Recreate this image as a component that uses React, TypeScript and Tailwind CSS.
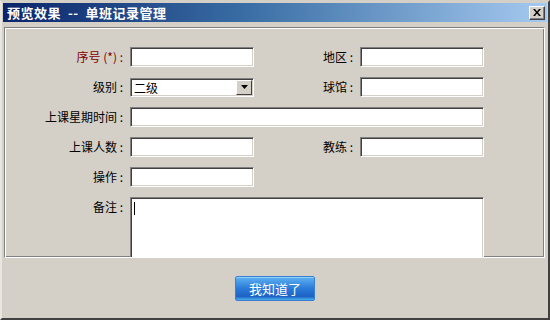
const font = "font-['SimSun','Noto_Sans_CJK_SC',sans-serif]"

const inset =
  "bg-white border border-t-[#808080] border-l-[#808080] border-b-white border-r-white shadow-[inset_1px_1px_0_#404040,inset_-1px_-1px_0_#d4d0c8]"

function Field({ w = "w-[124px]", h = "h-[20px]", children }: { w?: string; h?: string; children?: React.ReactNode }) {
  return <div className={`${inset} ${w} ${h} shrink-0 relative`}>{children}</div>
}

function Label({ text, w = "w-[121px]", red = false }: { text: string; w?: string; red?: boolean }) {
  return (
    <div className={`${w} shrink-0 text-right pr-[7px] text-[12px] leading-[20px] whitespace-pre ${red ? "text-[#800000]" : "text-black"}`}>
      {text}
    </div>
  )
}

export default function App() {
  return (
    <div className={`w-[550px] h-[320px] bg-[#d4d0c8] ${font} border-l-2 border-t-2 border-l-[#e8e6e1] border-t-[#d4d0c8] border-r-2 border-b-2 border-r-[#404040] border-b-[#404040] overflow-hidden flex flex-col`}>
      {/* title bar */}
      <div className="mx-px mt-px h-[19px] flex items-center justify-between bg-[linear-gradient(to_right,#0a246a,#3a6ea5_45%,#a6caf0)] pl-[4px] pr-[2px]">
        <span className="text-white font-bold text-[13px] leading-none whitespace-pre tracking-[0.5px]">预览效果  --  单班记录管理</span>
        <div className="w-[16px] h-[14px] bg-[#d4d0c8] border border-t-white border-l-white border-r-[#404040] border-b-[#404040] shadow-[inset_-1px_-1px_0_#808080] flex items-center justify-center">
          <svg width="8" height="7" viewBox="0 0 8 7">
            <path d="M0 0h2l2 2.5L6 0h2L5 3.5 8 7H6L4 4.5 2 7H0l3-3.5z" fill="#000" />
          </svg>
        </div>
      </div>

      {/* form panel */}
      <div className="mt-[5px] ml-[2px] mr-[3px] h-[231px] border border-t-[#808080] border-l-[#808080] border-b-white border-r-white shadow-[inset_1px_1px_0_#fff,inset_-1px_-1px_0_#808080] overflow-hidden">
        <div className="pt-[19px] pl-[4px] flex flex-col gap-[10px]">
          <div className="flex items-center">
            <Label text="序号 (*) :" red />
            <Field />
            <Label text="地区 :" w="w-[106px]" />
            <Field />
          </div>
          <div className="flex items-center">
            <Label text="级别 :" />
            <Field h="h-[19px]">
              <span className="absolute left-[3px] top-0 text-[12px] leading-[17px] text-black">二级</span>
              <div className="absolute right-[1px] top-[1px] w-[16px] h-[15px] bg-[#d4d0c8] border border-t-white border-l-white border-r-[#404040] border-b-[#404040] flex items-center justify-center">
                <svg width="7" height="4" viewBox="0 0 7 4">
                  <path d="M0 0h7L3.5 4z" fill="#000" />
                </svg>
              </div>
            </Field>
            <Label text="球馆 :" w="w-[106px]" />
            <Field />
          </div>
          <div className="flex items-center">
            <Label text="上课星期时间 :" />
            <Field w="w-[354px]" />
          </div>
          <div className="flex items-center">
            <Label text="上课人数 :" />
            <Field />
            <Label text="教练 :" w="w-[106px]" />
            <Field />
          </div>
          <div className="flex items-center">
            <Label text="操作 :" />
            <Field />
          </div>
          <div className="flex items-start">
            <Label text="备注 :" />
            <Field w="w-[354px]" h="h-[80px]">
              <span className="absolute left-[3px] top-[4px] w-px h-[13px] bg-black" />
            </Field>
          </div>
        </div>
      </div>

      {/* footer */}
      <div className="flex-1 flex items-center justify-center">
        <button className="w-[80px] h-[25px] rounded-[2px] border border-[#3b7fd0] bg-[linear-gradient(to_bottom,#5fb2f2,#2a7ad8_50%,#1d62c4_85%,#4ab0f0)] shadow-[inset_0_1px_0_#8fd0ff] text-white text-[13px] leading-none">
          我知道了
        </button>
      </div>
    </div>
  )
}
